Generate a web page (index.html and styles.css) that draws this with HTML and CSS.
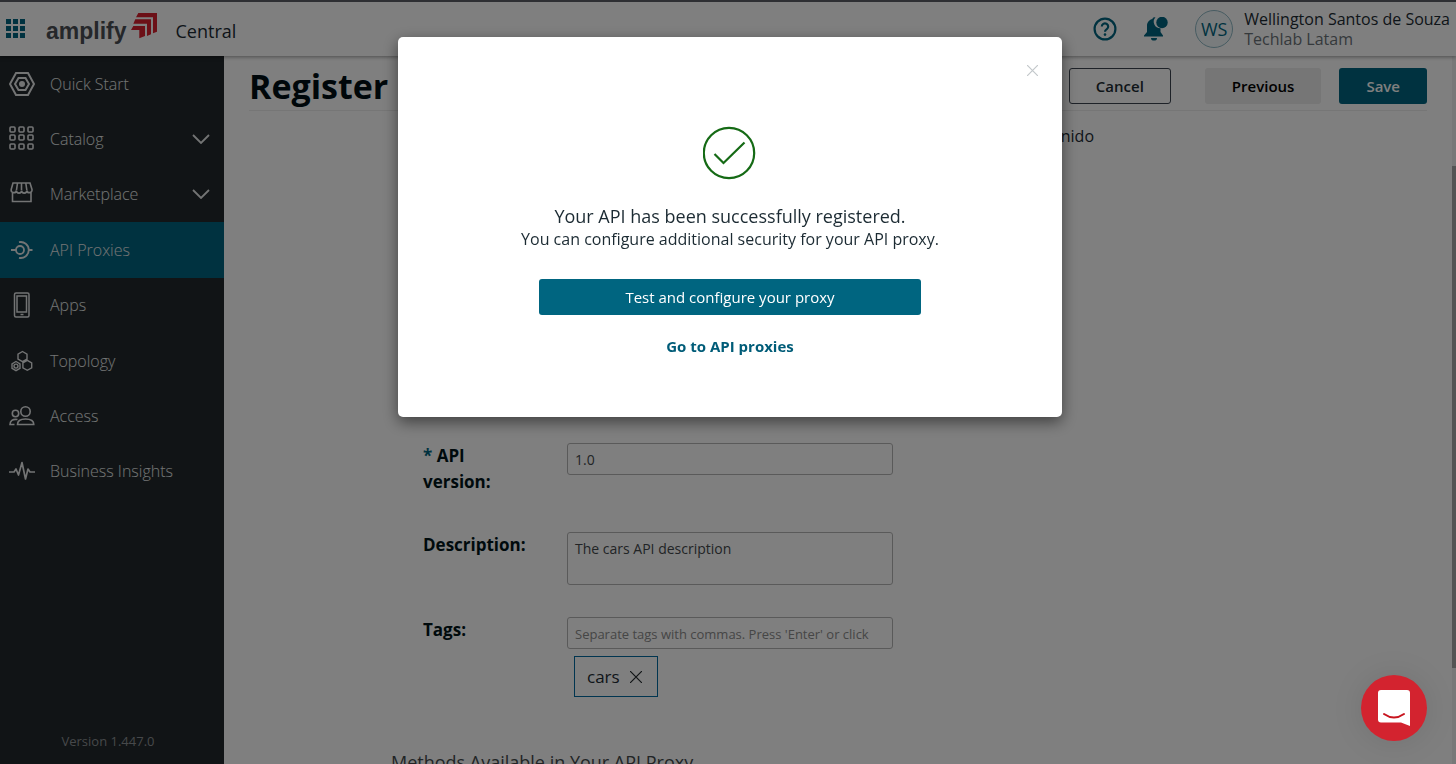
FILE: index.html
```
<!DOCTYPE html>
<html lang="en">
<head>
    <meta charset="UTF-8">
    <meta name="viewport" content="width=device-width, initial-scale=1.0">
    <title>Amplify Central</title>
    <link rel="stylesheet" href="styles.css">
</head>
<body>
    <!-- Top bar -->
    <header class="topbar">
        <button class="icon-button app-switcher" aria-label="Applications">
            <svg width="20" height="20" viewBox="0 0 20 20" fill="#006580">
                <path d="M0 0h5v5H0zM7 0h5v5H7zM14 0h5v5h-5zM0 7h5v5H0zM7 7h5v5H7zM14 7h5v5h-5zM0 14h5v5H0zM7 14h5v5H7zM14 14h5v5h-5z"/>
            </svg>
        </button>
        <a class="brand" href="#">
            <span class="brand-name">amplify</span>
            <svg class="brand-mark" width="27" height="27" viewBox="0 0 27 27" fill="#d9202e">
                <path d="M7.300 0H26v18.700L22 20.300v-16H5z"/>
                <path d="M4.300 6.300H20v15L16 23V10.700H2.300z"/>
                <path d="M2.300 13H14v10l-5.700 2.300V17H0z"/>
            </svg>
        </a>
        <span class="product">Central</span>
        <div class="topbar-right">
            <button class="icon-button" aria-label="Help">
                <svg width="24" height="24" viewBox="0 0 24 24" fill="none" stroke="#006580" stroke-width="2.200">
                    <circle cx="12" cy="12" r="10.400"/>
                    <path d="M8.800 9.600a3.200 3.200 0 1 1 5 2.600c-1.200.8-1.800 1.300-1.800 2.600"/>
                    <circle cx="12" cy="17.600" r="1.300" fill="#006580" stroke="none"/>
                </svg>
            </button>
            <button class="icon-button" aria-label="Notifications">
                <svg width="24" height="24" viewBox="0 0 24 24" fill="#006580">
                    <path d="M8.500 2c0-1 .7-1.700 2-1.700h1a6.500 6.500 0 0 0 5 10.900V15l2.500 3.500v1H0v-1L3 15V8.500C3 5.300 5.500 2.600 8.500 2z"/>
                    <path d="M7 21h6a3 2.600 0 0 1-6 0z"/>
                    <circle cx="18" cy="5.500" r="5.700"/>
                </svg>
            </button>
            <span class="avatar">WS</span>
            <div class="user">
                <div class="user-name">Wellington Santos de Souza</div>
                <div class="user-org">Techlab Latam</div>
            </div>
        </div>
    </header>

    <div class="layout">
        <!-- Side navigation -->
        <aside class="sidebar">
            <nav class="menu">
                <a class="menu-item" href="#">
                    <svg width="26" height="26" viewBox="0 0 26 26" fill="none" stroke="currentColor" stroke-width="2">
                        <path d="M7 2h12l6 11-6 11H7L1 13z"/>
                        <path d="M9.500 7h7l3.500 6-3.500 6h-7L6 13z"/>
                        <circle cx="13" cy="13" r="3" fill="currentColor" stroke="none"/>
                    </svg>
                    <span>Quick Start</span>
                </a>
                <a class="menu-item" href="#">
                    <svg width="26" height="26" viewBox="1 0 26 26" fill="none" stroke="currentColor" stroke-width="1.600">
                        <rect x="2" y="1" width="5" height="5" rx="1"/><rect x="11" y="1" width="5" height="5" rx="1"/><rect x="20" y="1" width="5" height="5" rx="1"/>
                        <rect x="2" y="9" width="5" height="5" rx="1"/><rect x="11" y="9" width="5" height="5" rx="1"/><rect x="20" y="9" width="5" height="5" rx="1"/>
                        <rect x="2" y="18" width="5" height="5" rx="1"/><rect x="11" y="18" width="5" height="5" rx="1"/><rect x="20" y="18" width="5" height="5" rx="1"/>
                    </svg>
                    <span>Catalog</span>
                    <svg class="chevron" width="18" height="10" viewBox="0 0 18 10" fill="none" stroke="currentColor" stroke-width="1.800"><path d="M1 1l8 8 8-8"/></svg>
                </a>
                <a class="menu-item" href="#">
                    <svg width="26" height="26" viewBox="0 0 26 26" fill="none" stroke="currentColor" stroke-width="1.600">
                        <path d="M4 2h17l2 6.500a2.600 2.600 0 0 1-5.200 1 2.600 2.600 0 0 1-5.200 0 2.600 2.600 0 0 1-5.200 0 2.600 2.600 0 0 1-5.200-1zM8.500 2l-1 7M12.500 2v7M16.800 2l1 7M3.500 11v9.500h18.500V11"/>
                    </svg>
                    <span>Marketplace</span>
                    <svg class="chevron" width="18" height="10" viewBox="0 0 18 10" fill="none" stroke="currentColor" stroke-width="1.800"><path d="M1 1l8 8 8-8"/></svg>
                </a>
                <a class="menu-item active" href="#">
                    <svg width="26" height="26" viewBox="0 0 26 26" fill="none" stroke="currentColor" stroke-width="1.800">
                        <circle cx="11" cy="13" r="4"/>
                        <path d="M2 13h5M19 13h4.500M10 5.200a8 8 0 1 1 0 15.600"/>
                    </svg>
                    <span>API Proxies</span>
                </a>
                <a class="menu-item" href="#">
                    <svg width="26" height="26" viewBox="0 0 26 26" fill="none" stroke="currentColor" stroke-width="1.500">
                        <rect x="5.500" y="1" width="14.500" height="24" rx="1.500"/>
                        <rect x="8" y="4" width="9.500" height="16"/>
                        <path d="M11.500 22.500h3"/>
                    </svg>
                    <span>Apps</span>
                </a>
                <a class="menu-item" href="#">
                    <svg width="26" height="26" viewBox="0 0 26 26" fill="none" stroke="currentColor" stroke-width="1.400">
                        <path d="M13.500 3.500l4.500 2.600v5L13.500 13.700 9 11.100v-5zM18.300 12.300l4.400 2.500v5l-4.400 2.500-4.400-2.500v-5zM7 13.500l4 2.300v4.600l-4 2.300-4-2.300v-4.600z"/>
                        <circle cx="7" cy="18.100" r="2"/>
                    </svg>
                    <span>Topology</span>
                </a>
                <a class="menu-item" href="#">
                    <svg width="26" height="26" viewBox="0 0 26 26" fill="none" stroke="currentColor" stroke-width="1.600">
                        <circle cx="16.500" cy="8.500" r="4.700"/>
                        <circle cx="6.500" cy="10.500" r="3.200"/>
                        <path d="M8.500 21.500c0-3.500 3-5.500 8-5.500s8.300 2 8.300 5.500zM8.500 16.500c-5-.8-7.500 1.500-7.500 5h4.500"/>
                    </svg>
                    <span>Access</span>
                </a>
                <a class="menu-item" href="#">
                    <svg width="26" height="26" viewBox="0 0 26 26" fill="none" stroke="currentColor" stroke-width="1.700" stroke-linejoin="round">
                        <path d="M0 14h5l2-3 2.500 6 3.500-12.500L16.500 21l2.500-10 2 3h5"/>
                    </svg>
                    <span>Business Insights</span>
                </a>
            </nav>
            <div class="version">Version 1.447.0</div>
        </aside>

        <!-- Registration page -->
        <main class="content">
            <div class="page-head">
                <h1>Register</h1>
                <div class="actions">
                    <button class="button outline">Cancel</button>
                    <button class="button subtle">Previous</button>
                    <button class="button primary">Save</button>
                </div>
            </div>

            <div class="panel">
                <p class="panel-note">nido</p>
                <form class="form">
                    <div class="field">
                        <label for="api-version"><span class="required">*</span> API version:</label>
                        <input id="api-version" type="text" value="1.0">
                    </div>
                    <div class="field">
                        <label for="description">Description:</label>
                        <textarea id="description">The cars API description</textarea>
                    </div>
                    <div class="field">
                        <label for="tags">Tags:</label>
                        <div class="tags">
                            <input id="tags" type="text" placeholder="Separate tags with commas. Press 'Enter' or click">
                            <span class="tag">cars
                                <button class="icon-button" type="button" aria-label="Remove cars">
                                    <svg width="12" height="12" viewBox="0 0 12 12" stroke="#222a2d" stroke-width="1.200"><path d="M0 0l12 12M12 0L0 12"/></svg>
                                </button>
                            </span>
                        </div>
                    </div>
                </form>
                <h2>Methods Available in Your API Proxy</h2>
            </div>
            <div class="scrollbar"><div class="scrollbar-thumb"></div></div>
        </main>
    </div>

    <!-- Confirmation dialog -->
    <div class="overlay">
        <div class="modal" role="dialog" aria-modal="true">
            <button class="icon-button modal-close" aria-label="Close">
                <svg width="11" height="11" viewBox="0 0 11 11" stroke="#c3c8cb" stroke-width="1.200"><path d="M0 0l11 11M11 0L0 11"/></svg>
            </button>
            <svg class="success" width="54" height="54" viewBox="0 0 54 54" fill="none" stroke="#156a15" stroke-width="2.200">
                <circle cx="26" cy="27" r="25.200"/>
                <path d="M11.500 28l9 9L41.500 16.500"/>
            </svg>
            <p class="modal-title">Your API has been successfully registered.</p>
            <p class="modal-text">You can configure additional security for your API proxy.</p>
            <button class="button primary modal-action">Test and configure your proxy</button>
            <a class="modal-link" href="#">Go to API proxies</a>
        </div>
    </div>

    <!-- Chat launcher -->
    <button class="icon-button chat" aria-label="Open chat">
        <svg width="34" height="38" viewBox="0 0 34 38">
            <path d="M4 1h26a3 3 0 0 1 3 3v33l-9-3.500H4a3 3 0 0 1-3-3V4a3 3 0 0 1 3-3z" fill="#fff"/>
            <path d="M7 25q10 7 20 0" fill="none" stroke="#c8141e" stroke-width="2" stroke-linecap="round"/>
        </svg>
    </button>
</body>
</html>
```
FILE: styles.css
```
* {
    box-sizing: border-box;
}

body {
    margin: 0;
    height: 100vh;
    overflow: hidden;
    display: flex;
    flex-direction: column;
    background-color: #fff;
    color: #1c2b33;
    font-family: "Open Sans", "Noto Sans", sans-serif;
    font-size: 16px;
}

h1, h2, p {
    margin: 0;
}

a {
    text-decoration: none;
}

button, input, textarea {
    font-family: inherit;
}

.icon-button {
    display: flex;
    padding: 0;
    border: none;
    background: none;
    cursor: pointer;
}

/* Top bar */
.topbar {
    position: relative;
    z-index: 1;
    flex: none;
    display: flex;
    align-items: center;
    height: 56px;
    padding: 0 6px;
    border-top: 2px solid #5c5e66;
    box-shadow: 0 1px 4px rgba(0, 0, 0, 0.4);
    background-color: #fff;
}

.brand {
    display: flex;
    align-items: center;
    margin-left: 20px;
    color: #4b4f55;
}

.brand-name {
    padding-top: 4px;
    font-family: "Liberation Sans", sans-serif;
    font-size: 23px;
    font-weight: bold;
}

.brand-mark {
    margin: 0 0 6px 4px;
}

.product {
    margin: 4px 0 0 18px;
    font-size: 18px;
}

.topbar-right {
    display: flex;
    align-items: center;
    gap: 27px;
    margin-left: auto;
}

.avatar {
    display: flex;
    align-items: center;
    justify-content: center;
    width: 38px;
    height: 38px;
    border: 1px solid #8fb8c4;
    border-radius: 50%;
    background-color: #f2f9fb;
    color: #006580;
    font-size: 18px;
}

.user {
    margin-left: -16px;
    font-size: 16px;
    line-height: 20px;
}

.user-org {
    color: #6b7378;
}

/* Side navigation */
.layout {
    flex: 1;
    display: flex;
    min-height: 0;
}

.sidebar {
    flex: none;
    display: flex;
    flex-direction: column;
    justify-content: space-between;
    width: 224px;
    background-color: #22282c;
    color: #fff;
}

.menu {
    display: grid;
    grid-auto-rows: 1fr;
    min-height: 443px;
}

.menu-item {
    display: flex;
    align-items: center;
    gap: 15px;
    padding: 0 14px 0 9px;
    color: #e6e8e9;
    font-weight: 300;
}

.menu-item.active {
    background-color: #006580;
}

.chevron {
    margin-left: auto;
}

.version {
    padding: 0 8px 14px 0;
    color: #8d9194;
    font-size: 13px;
    text-align: center;
}

/* Page */
.content {
    position: relative;
    flex: 1;
    overflow: hidden;
}

.page-head {
    display: flex;
    align-items: center;
    justify-content: space-between;
    height: 55px;
    margin: 0 29px 0 25px;
    padding-top: 6px;
    border-bottom: 1px solid #ececec;
}

h1 {
    color: #000f14;
    font-size: 34px;
    font-weight: bold;
}

.actions {
    display: flex;
    gap: 18px;
}

.button {
    height: 36px;
    padding: 0 26px;
    border: 1px solid transparent;
    border-radius: 3px;
    color: #1c2b33;
    font-size: 15px;
    font-weight: 600;
    cursor: pointer;
}

.button.outline {
    margin-right: 16px;
    border-color: #3c4450;
    background-color: #fff;
}

.button.subtle {
    background-color: #ececec;
    color: #000;
}

.button.primary {
    background-color: #006580;
    color: #fff;
}

.panel {
    width: 703px;
    margin-left: 167px;
    padding-top: 14px;
}

.panel-note {
    text-align: right;
}

.form {
    display: grid;
    row-gap: 32px;
    padding: 296px 0 0 32px;
}

.field {
    display: grid;
    grid-template-columns: 112px 326px;
    column-gap: 32px;
}

.field label {
    padding-bottom: 5px;
    color: #001419;
    font-size: 17px;
    font-weight: bold;
    line-height: 26px;
}

.required {
    color: #006580;
}

.field input,
.field textarea {
    display: block;
    width: 100%;
    height: 32px;
    padding: 0 7px;
    border: 1px solid #b4b4b4;
    border-radius: 3px;
    background-color: #fff;
    color: #44494c;
    font-size: 14px;
}

.field textarea {
    height: 53px;
    padding-top: 6px;
    resize: none;
}

.field input::placeholder {
    color: #8c8c8c;
    font-size: 13px;
}

.tag {
    display: inline-flex;
    align-items: center;
    gap: 10px;
    height: 41px;
    margin: 7px;
    padding: 0 15px 0 12px;
    border: 1px solid #006aa0;
    font-size: 17px;
}

h2 {
    margin-top: 46px;
    color: #44494c;
    font-size: 18px;
    font-weight: normal;
}

.scrollbar {
    position: absolute;
    top: 0;
    right: 0;
    bottom: 0;
    width: 4px;
    padding-top: 110px;
    background-color: #f1f1f1;
}

.scrollbar-thumb {
    height: 502px;
    background-color: #a8a8a8;
}

/* Confirmation dialog */
.overlay {
    position: fixed;
    inset: 0;
    z-index: 10;
    display: flex;
    align-items: flex-start;
    justify-content: center;
    padding: 37px 0 0 4px;
    background-color: rgba(0, 0, 0, 0.5);
}

.modal {
    position: relative;
    display: flex;
    flex-direction: column;
    align-items: center;
    width: 664px;
    padding: 89px 0 59px;
    border-radius: 5px;
    box-shadow: 0 5px 15px rgba(0, 0, 0, 0.5);
    background-color: #fff;
}

.modal-close {
    position: absolute;
    top: 28px;
    right: 24px;
}

.modal-title {
    margin-top: 24px;
    font-size: 18px;
    line-height: 24px;
}

.modal-text {
    font-size: 16px;
    line-height: 22px;
}

.modal-action {
    width: 382px;
    margin-top: 29px;
    font-weight: 500;
}

.modal-link {
    margin-top: 19px;
    color: #005c78;
    font-size: 15px;
    font-weight: bold;
    line-height: 24px;
}

/* Chat launcher */
.chat {
    position: fixed;
    right: 29px;
    bottom: 23px;
    z-index: 11;
    align-items: center;
    justify-content: center;
    width: 66px;
    height: 66px;
    border-radius: 50%;
    background-color: #d3232f;
    box-shadow: 0 1px 32px rgba(0, 0, 0, 0.1);
}
```
